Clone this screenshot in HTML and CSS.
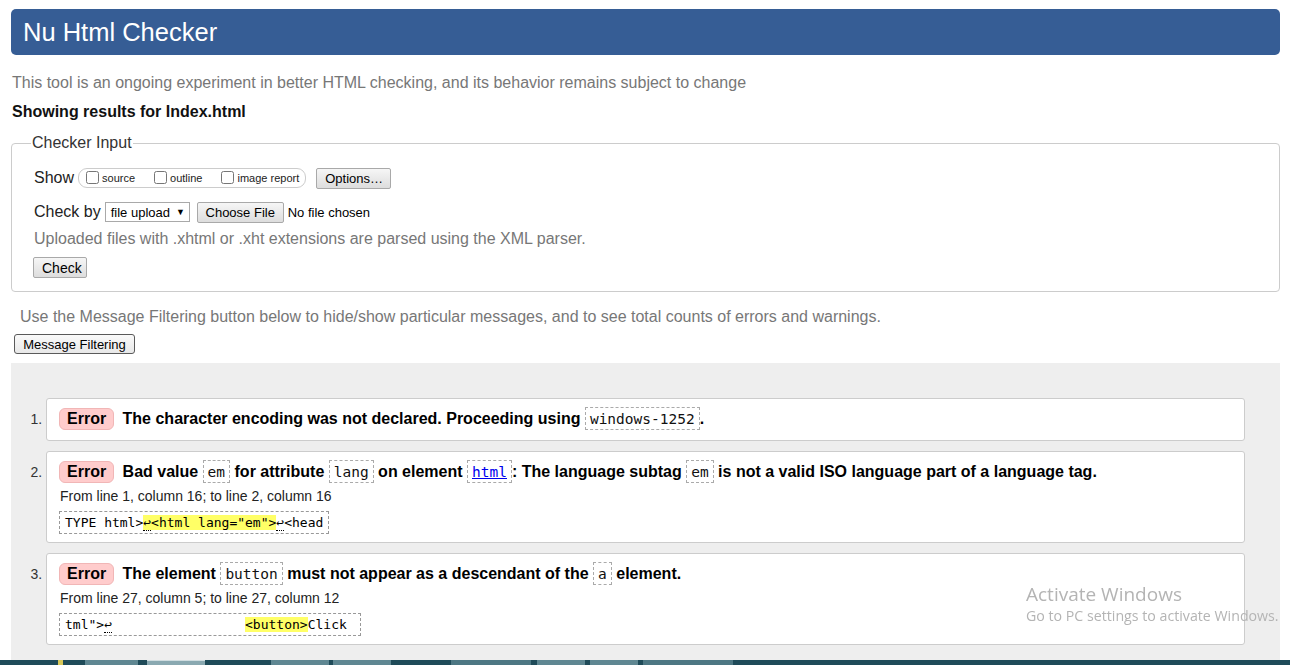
FILE: index.html
```html
<!DOCTYPE html>
<html lang="en">
<head>
<meta charset="utf-8">
<title>Nu Html Checker</title>
<link rel="stylesheet" href="styles.css">
</head>
<body>
<header class="masthead"><h1>Nu Html Checker</h1></header>
<p class="intro">This tool is an ongoing experiment in better HTML checking, and its behavior remains subject to change</p>
<p class="results-for">Showing results for Index.html</p>
<form class="checker">
  <fieldset>
    <legend>Checker Input</legend>
    <div class="row row-show">
      <span class="lbl">Show</span>
      <span class="cbgroup">
        <label class="cb"><input type="checkbox">source</label>
        <label class="cb"><input type="checkbox">outline</label>
        <label class="cb"><input type="checkbox">image report</label>
      </span>
      <button type="button" class="btn btn-options">Options…</button>
    </div>
    <div class="row row-by">
      <span class="lbl">Check by</span>
      <span class="select">file upload<span class="arrow">▼</span></span>
      <button type="button" class="btn btn-file">Choose File</button>
      <span class="nofile">No file chosen</span>
    </div>
    <p class="hint">Uploaded files with .xhtml or .xht extensions are parsed using the XML parser.</p>
    <button type="button" class="btn btn-check">Check</button>
  </fieldset>
</form>
<p class="filter-hint">Use the Message Filtering button below to hide/show particular messages, and to see total counts of errors and warnings.</p>
<button type="button" class="btn-filter">Message Filtering</button>
<ol class="messages">
  <li class="msg">
    <p class="msg-line"><strong class="badge">Error</strong> The character encoding was not declared. Proceeding using <code>windows-1252</code>.</p>
  </li>
  <li class="msg">
    <p class="msg-line"><strong class="badge">Error</strong> Bad value <code>em</code> for attribute <code>lang</code> on element <a class="code-link" href="#"><code>html</code></a>: The language subtag <code>em</code> is not a valid ISO language part of a language tag.</p>
    <p class="loc">From line 1, column 16; to line 2, column 16</p>
    <code class="extract">TYPE html&gt;<mark class="hl"><span class="lf">↩</span>&lt;html lang="em"&gt;</mark><span class="lf">↩</span>&lt;head</code>
  </li>
  <li class="msg">
    <p class="msg-line"><strong class="badge">Error</strong> The element <code>button</code> must not appear as a descendant of the <code>a</code> element.</p>
    <p class="loc">From line 27, column 5; to line 27, column 12</p>
    <code class="extract">tml"&gt;<span class="lf">↩</span>                 <mark class="hl">&lt;button&gt;</mark>Click </code>
  </li>
</ol>
<div class="watermark">
  <div class="wm-title">Activate Windows</div>
  <div class="wm-sub">Go to PC settings to activate Windows.</div>
</div>
<div class="taskbar">
  <span class="tb-dot"></span>
  <span class="tb-item tb-a"></span>
  <span class="tb-item tb-b tb-active"></span>
  <span class="tb-item tb-c"></span>
  <span class="tb-item tb-d"></span>
  <span class="tb-item tb-e"></span>
  <span class="tb-item tb-f"></span>
  <span class="tb-item tb-g"></span>
  <span class="tb-item tb-h"></span>
</div>
</body>
</html>
```
FILE: styles.css
```css
* { box-sizing: border-box; }
html, body { margin: 0; }
body {
  font-family: "Liberation Sans", Arial, sans-serif;
  color: #222;
  background: #fff;
  padding: 9px 10px 0 11px;
  width: 1290px;
  height: 665px;
  overflow: hidden;
}

.masthead {
  background: #365d95;
  border-radius: 5px;
  height: 46px;
  padding-left: 12px;
  display: flex;
  align-items: center;
}
.masthead h1 {
  margin: 0;
  font-weight: normal;
  font-size: 25.5px;
  color: #fff;
  line-height: 30px;
}

.intro {
  margin: 19px 0 0 1px;
  font-size: 16px;
  line-height: 18px;
  color: #777;
}
.results-for {
  margin: 11px 0 0 1px;
  font-size: 16px;
  line-height: 18px;
  font-weight: bold;
  color: #111;
}

fieldset {
  margin: 13px 0 0 0;
  padding: 0 22px 13px;
  border: 1px solid #ccc;
  border-radius: 4px;
}
legend {
  padding: 0 1px;
  margin-left: -3px;
  font-size: 16px;
  line-height: 18px;
  color: #333;
}

.row {
  display: flex;
  align-items: center;
}
.row-show { margin-top: 15px; height: 22px; }
.row-by { margin-top: 12px; height: 22px; }
.lbl { font-size: 16px; color: #222; }

.cbgroup {
  display: flex;
  align-items: center;
  height: 20px;
  margin-left: 4px;
  padding: 0 6px 0 7px;
  border: 1px solid #ccc;
  border-radius: 9px;
}
.cb {
  display: flex;
  align-items: center;
  font-size: 11px;
  color: #222;
  margin-right: 19px;
}
.cb:last-child { margin-right: 0; }
.cb input {
  width: 13px;
  height: 13px;
  margin: 0 3px 2px 0;
}

.btn {
  font-family: "Liberation Sans", Arial, sans-serif;
  font-size: 13px;
  color: #000;
  height: 21px;
  padding: 0 8px;
  border: 1px solid #a9a9a9;
  border-radius: 2px;
  background: linear-gradient(#f6f6f6, #dddddd);
}
.btn-options { margin-left: 10px; width: 75px; }

.select {
  display: inline-flex;
  align-items: center;
  height: 20px;
  width: 85px;
  margin-left: 4px;
  padding: 0 0 0 5px;
  border: 1px solid #a9a9a9;
  background: #fff;
  font-size: 13px;
  color: #000;
}
.arrow { font-size: 9px; margin-left: 6px; }
.btn-file { margin-left: 7px; width: 87px; padding: 0; }
.nofile { margin-left: 4px; font-size: 13px; color: #000; }

.hint {
  margin: 7px 0 0;
  font-size: 16px;
  line-height: 18px;
  color: #777;
}
.btn-check {
  display: block;
  margin: 9px 0 0 -1px;
  width: 54px;
  font-size: 14px;
}

.filter-hint {
  margin: 16px 0 0 9px;
  font-size: 16px;
  line-height: 18px;
  color: #777;
}
.btn-filter {
  display: block;
  margin: 8px 0 0 3px;
  height: 20px;
  width: 121px;
  padding: 0;
  font-family: "Liberation Sans", Arial, sans-serif;
  font-size: 13px;
  color: #000;
  background: linear-gradient(#fafafa, #e8e8e8);
  border: 1px solid #5a5a5a;
  border-radius: 3px;
}

.messages {
  margin: 9px 0 0;
  padding: 35px 35px 30px 35px;
  background: #eee;
  list-style: decimal outside;
}
.msg {
  background: #fff;
  border: 1px solid #ccc;
  border-radius: 3px;
  padding: 8px 12px 8px;
  margin-bottom: 10px;
  font-size: 14px;
  color: #333;
}
.msg::marker {
  font-family: "Liberation Sans", Arial, sans-serif;
  color: #333;
}
.msg-line {
  margin: 0;
  font-size: 16px;
  line-height: 24px;
  font-weight: bold;
  color: #000;
}
.msg-line:last-child { margin-bottom: 1px; }
.badge {
  display: inline-block;
  background: #fcc;
  border: 1px solid #f1b6b6;
  border-radius: 6px;
  padding: 1px 7px;
  line-height: 18px;
  margin-right: 4px;
  color: #000;
}
code {
  font-family: "DejaVu Sans Mono", monospace;
  font-size: 14.5px;
  font-weight: normal;
  color: #111;
  border: 1px dashed #aaa;
  padding: 3px 4px 2px;
}
.code-link { color: #00e; }
.code-link code { color: #00e; text-decoration: underline; }

.loc {
  margin: 4px 0 0 1px;
  font-size: 14px;
  line-height: 16px;
  color: #222;
}
.extract {
  display: block;
  width: max-content;
  margin-top: 7px;
  border: 1px dashed #999;
  padding: 2px 5px;
  font-size: 13px;
  line-height: 17px;
  white-space: pre;
  color: #000;
}
.hl { background: #ff6; color: #000; }
.lf { border-bottom: 1px dotted #000; }

.watermark {
  position: fixed;
  left: 1026px;
  top: 582px;
  color: #b4b4b4;
  font-family: "Open Sans", "Noto Sans", sans-serif;
  pointer-events: none;
}
.wm-title { font-size: 19px; line-height: 24px; }
.wm-sub { font-size: 14.2px; line-height: 20px; }

.taskbar {
  position: fixed;
  left: 0;
  bottom: 0;
  width: 1290px;
  height: 5px;
  background: #1f4b59;
  display: flex;
  align-items: stretch;
}
.tb-dot { width: 5px; margin-left: 58px; background: #d8c85a; }
.tb-item { background: #5f8792; }
.tb-a { margin-left: 22px; width: 53px; }
.tb-b { margin-left: 9px; width: 58px; }
.tb-active { background: #8aa9b1; border-top: 1px solid #d0dde0; }
.tb-c { margin-left: 66px; width: 58px; }
.tb-d { margin-left: 4px; width: 58px; }
.tb-e { margin-left: 60px; width: 80px; background: #4d7783; }
.tb-f { margin-left: 6px; width: 48px; }
.tb-g { margin-left: 5px; width: 48px; }
.tb-h { margin-left: 5px; width: 90px; background: #4d7783; }
```
